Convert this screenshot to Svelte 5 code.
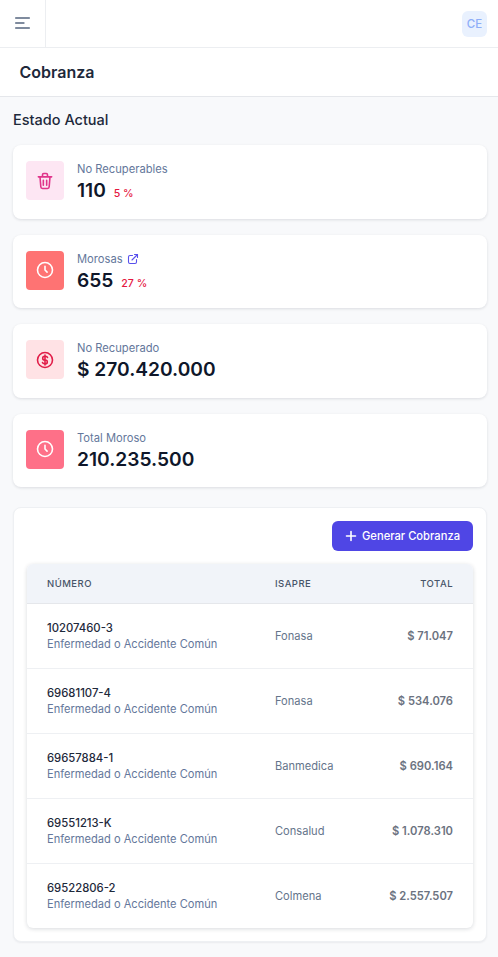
<script>
    const stats = [
        { label: 'No Recuperables', value: '110', pct: '5 %', tone: 'pink', icon: 'trash' },
        { label: 'Morosas', value: '655', pct: '27 %', tone: 'coral', icon: 'clock', link: true },
        { label: 'No Recuperado', value: '$ 270.420.000', tone: 'rose', icon: 'dollar' },
        { label: 'Total Moroso', value: '210.235.500', tone: 'red', icon: 'clock' }
    ];

    const rows = [
        { num: '10207460-3', isapre: 'Fonasa', total: '$ 71.047' },
        { num: '69681107-4', isapre: 'Fonasa', total: '$ 534.076' },
        { num: '69657884-1', isapre: 'Banmedica', total: '$ 690.164' },
        { num: '69551213-K', isapre: 'Consalud', total: '$ 1.078.310' },
        { num: '69522806-2', isapre: 'Colmena', total: '$ 2.557.507' }
    ];
</script>

<div class="page">
    <header class="topbar">
        <button class="burger" aria-label="Menu">
            <svg width="15" height="12" viewBox="0 0 15 12" fill="none" stroke="#56667f" stroke-width="1.3" stroke-linecap="round">
                <path d="M.6 1h13.8M.6 6h8.4M.6 11h13.8" />
            </svg>
        </button>
        <div class="avatar">CE</div>
    </header>

    <div class="titlebar"><h1>Cobranza</h1></div>

    <main class="content">
        <h2>Estado Actual</h2>

        {#each stats as s}
            <section class="card">
                <div class="icon {s.tone}">
                    <svg width="20" height="20" viewBox="0 0 24 24" fill="none" stroke="currentColor" stroke-width="1.9" stroke-linecap="round" stroke-linejoin="round">
                        {#if s.icon === 'trash'}
                            <path d="M4 7h16M9 7V4.5A1.5 1.5 0 0 1 10.5 3h3A1.5 1.5 0 0 1 15 4.5V7M6 7l1 12a2 2 0 0 0 2 2h6a2 2 0 0 0 2-2l1-12M10 11v6M14 11v6" />
                        {:else if s.icon === 'clock'}
                            <circle cx="12" cy="12" r="9" />
                            <path d="M12 7.5V12l2.5 2.5" />
                        {:else}
                            <circle cx="12" cy="12" r="9" />
                            <path d="M15 9a2.5 2 0 0 0-2.5-1.5h-1a2.25 2.25 0 0 0 0 4.5h1a2.25 2.25 0 0 1 0 4.5h-1A2.5 2 0 0 1 9 15M12 6v12" />
                        {/if}
                    </svg>
                </div>
                <div class="stat">
                    <div class="label">
                        {s.label}
                        {#if s.link}
                            <svg class="ext" width="12" height="12" viewBox="0 0 24 24" fill="none" stroke="#5850ec" stroke-width="2.2" stroke-linecap="round" stroke-linejoin="round">
                                <path d="M11 5H6a3 3 0 0 0-3 3v10a3 3 0 0 0 3 3h10a3 3 0 0 0 3-3v-5M10 14 21 3M15 3h6v6" />
                            </svg>
                        {/if}
                    </div>
                    <div class="value">
                        {s.value}
                        {#if s.pct}<span class="pct">{s.pct}</span>{/if}
                    </div>
                </div>
            </section>
        {/each}

        <section class="panel">
            <div class="actions">
                <button class="primary">
                    <svg width="12" height="12" viewBox="0 0 12 12" fill="none" stroke="#fff" stroke-width="1.6" stroke-linecap="round">
                        <path d="M6 1.5v9M1.5 6h9" />
                    </svg>
                    Generar Cobranza
                </button>
            </div>

            <div class="tablewrap">
                <table>
                    <thead>
                        <tr>
                            <th>Número</th>
                            <th>Isapre</th>
                            <th class="right">Total</th>
                        </tr>
                    </thead>
                    <tbody>
                        {#each rows as r}
                            <tr>
                                <td>
                                    <div class="num">{r.num}</div>
                                    <div class="desc">Enfermedad o Accidente Común</div>
                                </td>
                                <td class="isapre">{r.isapre}</td>
                                <td class="total right">{r.total}</td>
                            </tr>
                        {/each}
                    </tbody>
                </table>
            </div>
        </section>
    </main>
</div>

<style>
    :global(body) {
        margin: 0;
        background: #f8f9fb;
        font-family: Inter, "Liberation Sans", sans-serif;
    }

    .page {
        width: 498px;
        min-height: 957px;
        background: #f8f9fb;
    }

    .topbar {
        height: 47px;
        display: flex;
        align-items: center;
        justify-content: space-between;
        background: #fff;
        border-bottom: 1px solid #eceef1;
    }

    .burger {
        width: 46px;
        height: 47px;
        padding: 0 0 2px;
        display: flex;
        align-items: center;
        justify-content: center;
        background: none;
        border: 0;
        border-right: 1px solid #eceef1;
        box-sizing: border-box;
    }

    .avatar {
        width: 25px;
        height: 26px;
        margin-right: 11px;
        border-radius: 6px;
        background: #e9f1fe;
        color: #8eaef8;
        font-size: 11.5px;
        font-weight: 500;
        display: flex;
        align-items: center;
        justify-content: center;
    }

    .titlebar {
        height: 48px;
        display: flex;
        align-items: center;
        padding-left: 19.5px;
        background: #fff;
        border-bottom: 1px solid #e5e7eb;
    }

    h1 {
        margin: 0;
        font-size: 16px;
        font-weight: 600;
        color: #1e293b;
    }

    .content {
        padding: 13px 11px 14px 13px;
    }

    h2 {
        margin: 0 0 15px;
        font-size: 14.5px;
        line-height: 20px;
        font-weight: 500;
        color: #1e293b;
    }

    .card {
        display: flex;
        gap: 13px;
        height: 73.6px;
        box-sizing: border-box;
        padding: 16px 13px;
        margin-bottom: 16px;
        background: #fff;
        border-radius: 8px;
        box-shadow: 0 1px 3px rgba(15, 23, 42, 0.12);
    }

    .icon {
        flex: none;
        width: 38px;
        height: 39px;
        border-radius: 4px;
        display: flex;
        align-items: center;
        justify-content: center;
    }

    .pink  { background: #fde6f3; color: #e0348a; }
    .coral { background: #fe7373; color: #fff; }
    .rose  { background: #ffe2e5; color: #e11d48; }
    .red   { background: #fe7088; color: #fff; }

    .label {
        display: flex;
        align-items: center;
        gap: 4px;
        font-size: 11.2px;
        line-height: 16px;
        color: #64779b;
    }

    .value {
        font-size: 19.2px;
        line-height: 26px;
        font-weight: 600;
        color: #0f172a;
    }

    .pct {
        margin-left: 3px;
        font-size: 10.6px;
        font-weight: 500;
        color: #e5173f;
    }

    .panel {
        margin-top: 20px;
        padding: 13px;
        height: 435px;
        box-sizing: border-box;
        background: #fff;
        border-radius: 8px;
        border: 1px solid #eef0f3;
        box-shadow: 0 1px 2px rgba(15, 23, 42, 0.06);
    }

    .actions {
        display: flex;
        justify-content: flex-end;
        margin-bottom: 13px;
    }

    .primary {
        height: 30px;
        width: 141px;
        padding: 0;
        display: flex;
        align-items: center;
        justify-content: center;
        gap: 5px;
        border: 0;
        border-radius: 6px;
        background: #4f46e5;
        color: #fff;
        font-family: inherit;
        font-size: 11.2px;
        font-weight: 500;
    }

    .tablewrap {
        border-radius: 6px;
        overflow: hidden;
        box-shadow: 0 1px 4px rgba(15, 23, 42, 0.16);
    }

    table {
        width: 100%;
        border-collapse: collapse;
        table-layout: fixed;
    }

    th {
        height: 39px;
        padding: 0;
        background: #f1f4f9;
        border-bottom: 1px solid #e5e7eb;
        font-size: 9.5px;
        font-weight: 500;
        letter-spacing: 0.05em;
        text-align: left;
        text-transform: uppercase;
        color: #475569;
    }

    th:first-child, td:first-child {
        width: 228px;
        padding-left: 20px;
        box-sizing: content-box;
    }

    th:last-child, td:last-child {
        padding-right: 20px;
    }

    td {
        height: 64px;
        padding: 0;
        border-bottom: 1px solid #eef0f3;
    }

    tr:last-child td {
        border-bottom: 0;
    }

    .right {
        text-align: right;
    }

    .num {
        font-size: 11.3px;
        line-height: 16px;
        font-weight: 500;
        color: #1e293b;
    }

    .desc {
        font-size: 11.1px;
        line-height: 16px;
        color: #64779b;
    }

    .isapre {
        font-size: 11.1px;
        color: #64748b;
    }

    .total {
        font-size: 11.2px;
        font-weight: 600;
        color: #6b7280;
    }
</style>
